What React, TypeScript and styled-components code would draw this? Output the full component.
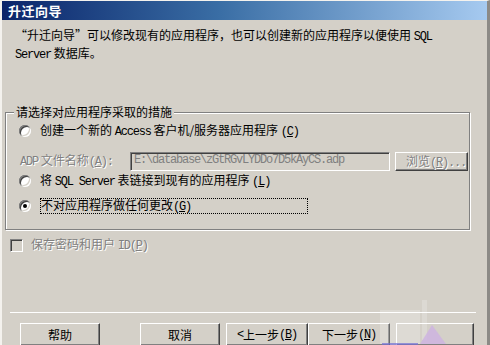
import React from 'react';
import styled, { createGlobalStyle } from 'styled-components';

// ── Data ──────────────────────────────────────────────────────────────────────

const CJK = `"Noto Sans CJK SC", "Noto Sans", sans-serif`;
const MONO = `"Liberation Mono", "Noto Sans CJK SC", monospace`;

// ── Component ─────────────────────────────────────────────────────────────────

export default function App() {
  return (
    <>
      <GlobalStyle />
      <Window lang="zh-CN">
        <TitleBar>升迁向导</TitleBar>

        <Intro>
          “升迁向导”可以修改现有的应用程序，也可以创建新的应用程序以便使用 <Latin>SQL</Latin>
          <br />
          <Latin>Server</Latin> 数据库。
        </Intro>

        <Group>
          <Legend>请选择对应用程序采取的措施</Legend>

          <OptionRow>
            <RadioMark />
            <OptionLabel>
              创建一个新的 <Latin>Access</Latin> 客户机/服务器应用程序 <Latin>(<u>C</u>)</Latin>
            </OptionLabel>
          </OptionRow>

          <FileRow>
            <FileLabel>
              <Latin>ADP</Latin> 文件名称<Latin>(<u>A</u>):</Latin>
            </FileLabel>
            <PathInput>E:\database\zGtRGvLYDDo7D5kAyCS.adp</PathInput>
            <BrowseButton>
              浏览<Latin>(<u>R</u>)...</Latin>
            </BrowseButton>
          </FileRow>

          <OptionRow>
            <RadioMark />
            <OptionLabel>
              将 <Latin>SQL Server</Latin> 表链接到现有的应用程序 <Latin>(<u>L</u>)</Latin>
            </OptionLabel>
          </OptionRow>

          <OptionRow $gap={5}>
            <RadioMark $checked />
            <FocusLabel>
              不对应用程序做任何更改<Latin>(<u>G</u>)</Latin>
            </FocusLabel>
          </OptionRow>
        </Group>

        <CheckRow>
          <CheckMark />
          <DisabledText>
            保存密码和用户 <Latin>ID(<u>P</u>)</Latin>
          </DisabledText>
        </CheckRow>

        <Separator />

        <ButtonBar>
          <Button $w={80}>帮助</Button>
          <Button $w={80} $ml={40}>取消</Button>
          <Button $w={82} $ml={6}>
            <Latin>&lt;</Latin> 上一步<Latin>(<u>B</u>)</Latin>
          </Button>
          <Button $w={82}>
            下一步<Latin>(<u>N</u>)</Latin>
          </Button>
          <Button $w={78} $ml={6} />
        </ButtonBar>

        {/* stray watermark smudge over the last button */}
        <Watermark width="100" height="50" viewBox="0 0 100 50">
          <rect x="4" y="12" width="40" height="34" fill="#ffffff" opacity="0.22" />
          <rect x="46" y="2" width="5" height="40" fill="#ffffff" opacity="0.2" />
          <polygon points="44,46 56,27 70,46" fill="#cdb2e2" opacity="0.8" />
          <rect x="6" y="45" width="36" height="2" fill="#7470d6" opacity="0.7" />
        </Watermark>
      </Window>
    </>
  );
}

// ── Styled components ─────────────────────────────────────────────────────────

const GlobalStyle = createGlobalStyle`
  html, body { margin: 0; padding: 0; background: #d4d0c8; }
  body { font-family: ${CJK}; font-size: 12px; color: #000; }
  u { text-decoration: underline; text-underline-offset: 1px; }
`;

const Window = styled.div`
  position: relative;
  box-sizing: border-box;
  width: 490px;
  height: 345px;
  overflow: hidden;
  background: #d4d0c8;
  border-top: 1px solid #f4f2ee;
  border-left: 2px solid #f4f2ee;
  border-right: 3px solid #8c8a86;
  display: flex;
  flex-direction: column;
`;

const TitleBar = styled.div`
  height: 19px;
  line-height: 19px;
  padding-left: 6px;
  background: linear-gradient(90deg, #0a246a 0%, #3a6ea5 45%, #a6caf0 100%);
  color: #fff;
  font-family: ${CJK};
  font-weight: 700;
  font-size: 13px;
  letter-spacing: 0.5px;
`;

const Latin = styled.span`
  font-family: ${MONO};
  letter-spacing: -1.2px;
`;

const Intro = styled.div`
  padding: 7px 0 0 13px;
  line-height: 16px;
  font-size: 12px;
`;

const Group = styled.fieldset`
  box-sizing: border-box;
  width: 465px;
  margin: 41px 0 0 3px;
  padding: 1px 0 13px 0;
  border: 1px solid #808080;
  box-shadow: 1px 1px 0 #fff, inset 1px 1px 0 #fff;
  display: flex;
  flex-direction: column;
`;

const Legend = styled.legend`
  margin-left: 8px;
  padding: 0 2px;
  line-height: 16px;
  font-size: 12px;
  background: #d4d0c8;
`;

const OptionRow = styled.div<{ $gap?: number }>`
  display: flex;
  align-items: center;
  height: 20px;
  margin-top: ${(p) => p.$gap ?? 0}px;
  padding-left: 13px;
  gap: 9px;
`;

const RadioMark = styled.span<{ $checked?: boolean }>`
  position: relative;
  flex-shrink: 0;
  width: 12px;
  height: 12px;
  border-radius: 50%;
  background: #fff;
  box-shadow: inset 1px 1px 0 #808080, inset -1px -1px 0 #fff, inset 2px 2px 0 #404040,
    inset -2px -2px 0 #d4d0c8;

  &::after {
    content: '';
    display: ${(p) => (p.$checked ? 'block' : 'none')};
    position: absolute;
    left: 4px;
    top: 4px;
    width: 4px;
    height: 4px;
    border-radius: 50%;
    background: #000;
  }
`;

const OptionLabel = styled.span`
  white-space: nowrap;
  line-height: 16px;
`;

const FocusLabel = styled.span`
  box-sizing: border-box;
  width: 268px;
  height: 16px;
  line-height: 14px;
  outline: 1px dotted #000;
  outline-offset: -1px;
  padding-left: 1px;
  white-space: nowrap;
`;

const FileRow = styled.div`
  display: flex;
  align-items: center;
  height: 20px;
  margin-top: 10px;
  padding-left: 14px;
`;

const DisabledText = styled.span`
  color: #808080;
  text-shadow: 1px 1px 0 #fff;
  white-space: nowrap;
  line-height: 16px;
`;

const FileLabel = styled(DisabledText)`
  width: 110px;
  flex-shrink: 0;
`;

const PathInput = styled.div`
  box-sizing: border-box;
  width: 260px;
  height: 19px;
  padding: 0 3px;
  line-height: 15px;
  background: #d4d0c8;
  border: 1px solid;
  border-color: #808080 #fff #fff #808080;
  box-shadow: inset 1px 1px 0 #404040, inset -1px -1px 0 #d4d0c8;
  color: #808080;
  font-family: ${MONO};
  font-size: 12px;
  letter-spacing: -1.2px;
  white-space: nowrap;
  overflow: hidden;
`;

const BrowseButton = styled.div`
  box-sizing: border-box;
  width: 73px;
  height: 19px;
  margin-left: 5px;
  padding-left: 10px;
  line-height: 16px;
  border: 1px solid;
  border-color: #fff #404040 #404040 #fff;
  box-shadow: inset -1px -1px 0 #808080;
  color: #808080;
  text-shadow: 1px 1px 0 #fff;
  white-space: nowrap;
`;

const CheckRow = styled.div`
  display: flex;
  align-items: center;
  gap: 8px;
  height: 16px;
  margin-top: 7px;
  padding-left: 8px;
`;

const CheckMark = styled.span`
  box-sizing: border-box;
  flex-shrink: 0;
  width: 13px;
  height: 13px;
  background: #d4d0c8;
  border: 1px solid;
  border-color: #808080 #fff #fff #808080;
  box-shadow: inset 1px 1px 0 #404040, inset -1px -1px 0 #d4d0c8;
`;

const Separator = styled.div`
  width: 466px;
  height: 1px;
  margin: 59px 0 0 8px;
  background: #808080;
  border-bottom: 1px solid #fff;
`;

const ButtonBar = styled.div`
  display: flex;
  align-items: flex-start;
  margin-top: 10px;
  padding-left: 18px;
`;

const Button = styled.div<{ $w: number; $ml?: number }>`
  box-sizing: border-box;
  flex-shrink: 0;
  width: ${(p) => p.$w}px;
  height: 23px;
  margin-left: ${(p) => p.$ml ?? 0}px;
  border: 1px solid;
  border-color: #fff #404040 #404040 #fff;
  box-shadow: inset -1px -1px 0 #808080;
  display: flex;
  align-items: center;
  justify-content: center;
  line-height: 16px;
  white-space: nowrap;
`;

const Watermark = styled.svg`
  position: absolute;
  left: 374px;
  top: 297px;
  pointer-events: none;
`;
